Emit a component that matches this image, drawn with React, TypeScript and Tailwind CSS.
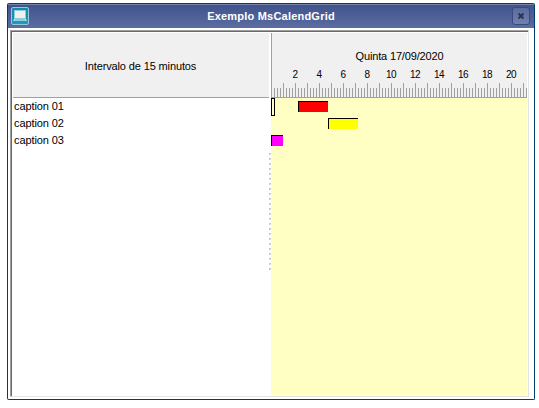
import React from "react";

const ticks = Array.from({ length: 85 }, (_, i) => 2 + i * 3);
const hours = [2, 4, 6, 8, 10, 12, 14, 16, 18, 20];
const captions = ["caption 01", "caption 02", "caption 03"];
const grips = Array.from({ length: 24 }, (_, i) => i);

function MonitorIcon() {
  return (
    <svg width="18" height="18" viewBox="0 0 18 18" className="block shrink-0">
      <defs>
        <linearGradient id="teal" x1="0" y1="0" x2="0" y2="1">
          <stop offset="0" stopColor="#1688a8" />
          <stop offset="1" stopColor="#12a0c0" />
        </linearGradient>
      </defs>
      <rect x="0.5" y="0.5" width="17" height="17" rx="1.5" fill="url(#teal)" stroke="#9cc4d8" />
      <rect x="3.5" y="3.5" width="11" height="8" fill="#f0f0ec" stroke="#8fcbdb" />
      <path d="M3 12h12l1 2H2z" fill="#b4dce6" />
      <path d="M4 13h10" stroke="#4a9db4" strokeWidth="0.6" />
    </svg>
  );
}

function TitleBar() {
  return (
    <div className="flex h-6 shrink-0 items-center bg-linear-to-b from-[#3f528c] to-[#5b6da1] pr-[4px] pl-[3px] shadow-[inset_0_1px_#7483ab]">
      <MonitorIcon />
      <div className="flex-1 pl-px text-center text-[11px] leading-4 font-bold tracking-[0.21px] whitespace-nowrap text-white">
        Exemplo MsCalendGrid
      </div>
      <div className="flex size-[18px] items-center justify-center rounded-[3px] border border-[#374b80] bg-linear-to-b from-[#5a6a9c] to-[#7180ad]">
        <svg width="6" height="6" viewBox="0 0 6 6">
          <path d="M.5 .5l5 5M5.5 .5l-5 5" stroke="#293354" strokeWidth="2" />
        </svg>
      </div>
    </div>
  );
}

function Timeline() {
  return (
    <div className="flex h-[65px] flex-col overflow-hidden border-b border-l border-[#a0a0a0] bg-[#f0f0f0]">
      <div className="mt-[16px] h-[14px] text-center text-[11px] leading-[14px] tracking-[-0.16px]">
        Quinta 17/09/2020
      </div>
      <div className="mt-[6px] flex h-[12px] pl-[11px] text-[10px] leading-[12px] tracking-[-0.5px]">
        {hours.map((h) => (
          <span key={h} className="w-6 shrink-0 text-center">
            {h}
          </span>
        ))}
      </div>
      <svg width="255" height="14" viewBox="0 0 255 14" className="mt-[2px] block" shapeRendering="crispEdges">
        {ticks.map((x, i) => (
          <rect key={x} x={x} y={i % 4 === 3 ? 0 : 5} width="1" height="14" fill="#a0a0a0" />
        ))}
      </svg>
    </div>
  );
}

function Schedule() {
  return (
    <div className="flex-1 bg-[#ffffc4]">
      <div className="flex h-5 items-start">
        <div className="h-[18px] w-[4px] border border-black" />
        <div className="mt-[3px] ml-[23px] h-[11px] w-[30px] border-t border-l border-black bg-[#ff0000]" />
      </div>
      <div className="ml-[57px] h-[11px] w-[30px] border-t border-l border-black bg-[#ffff00]" />
      <div className="mt-[6px] h-[11px] w-[12px] border-t border-l border-black bg-[#ff00ff]" />
    </div>
  );
}

export default function App() {
  return (
    <div className="h-[408px] w-[539px] overflow-hidden bg-white pt-[3px] pl-[7px] font-['Liberation_Sans',Arial,sans-serif] text-black">
      <div className="flex h-[397px] w-[528px] flex-col overflow-hidden rounded-[2px] border border-t-[#2c3440] border-r-[#003c6c] border-b-[#003c6c] border-l-[#003c6c] bg-white">
        <TitleBar />
        <div className="mt-[2px] ml-[2px] h-[367px] w-[519px] border border-t-[#a0a0a0] border-r-[#e3e3e3] border-b-[#e3e3e3] border-l-[#a0a0a0]">
          <div className="flex h-full border-t border-l border-[#696969] pt-px pr-px pb-px pl-px">
            <div className="flex w-[256px] flex-col">
              <div className="flex h-[65px] items-center justify-center border-b border-[#a0a0a0] bg-[#f0f0f0] pt-[2px] pr-px text-[11px] tracking-[-0.13px]">
                Intervalo de 15 minutos
              </div>
              <div className="pl-px text-[11px] leading-[17px] tracking-[-0.1px]">
                {captions.map((c) => (
                  <div key={c}>{c}</div>
                ))}
              </div>
            </div>
            <div className="flex w-[2px] flex-col gap-[3px] pt-[120px]">
              {grips.map((g) => (
                <div key={g} className="size-[2px] border-t border-l border-[#c8c8c8] bg-[#e0e0e0]" />
              ))}
            </div>
            <div className="flex min-w-0 flex-1 flex-col">
              <Timeline />
              <Schedule />
            </div>
          </div>
        </div>
      </div>
    </div>
  );
}
